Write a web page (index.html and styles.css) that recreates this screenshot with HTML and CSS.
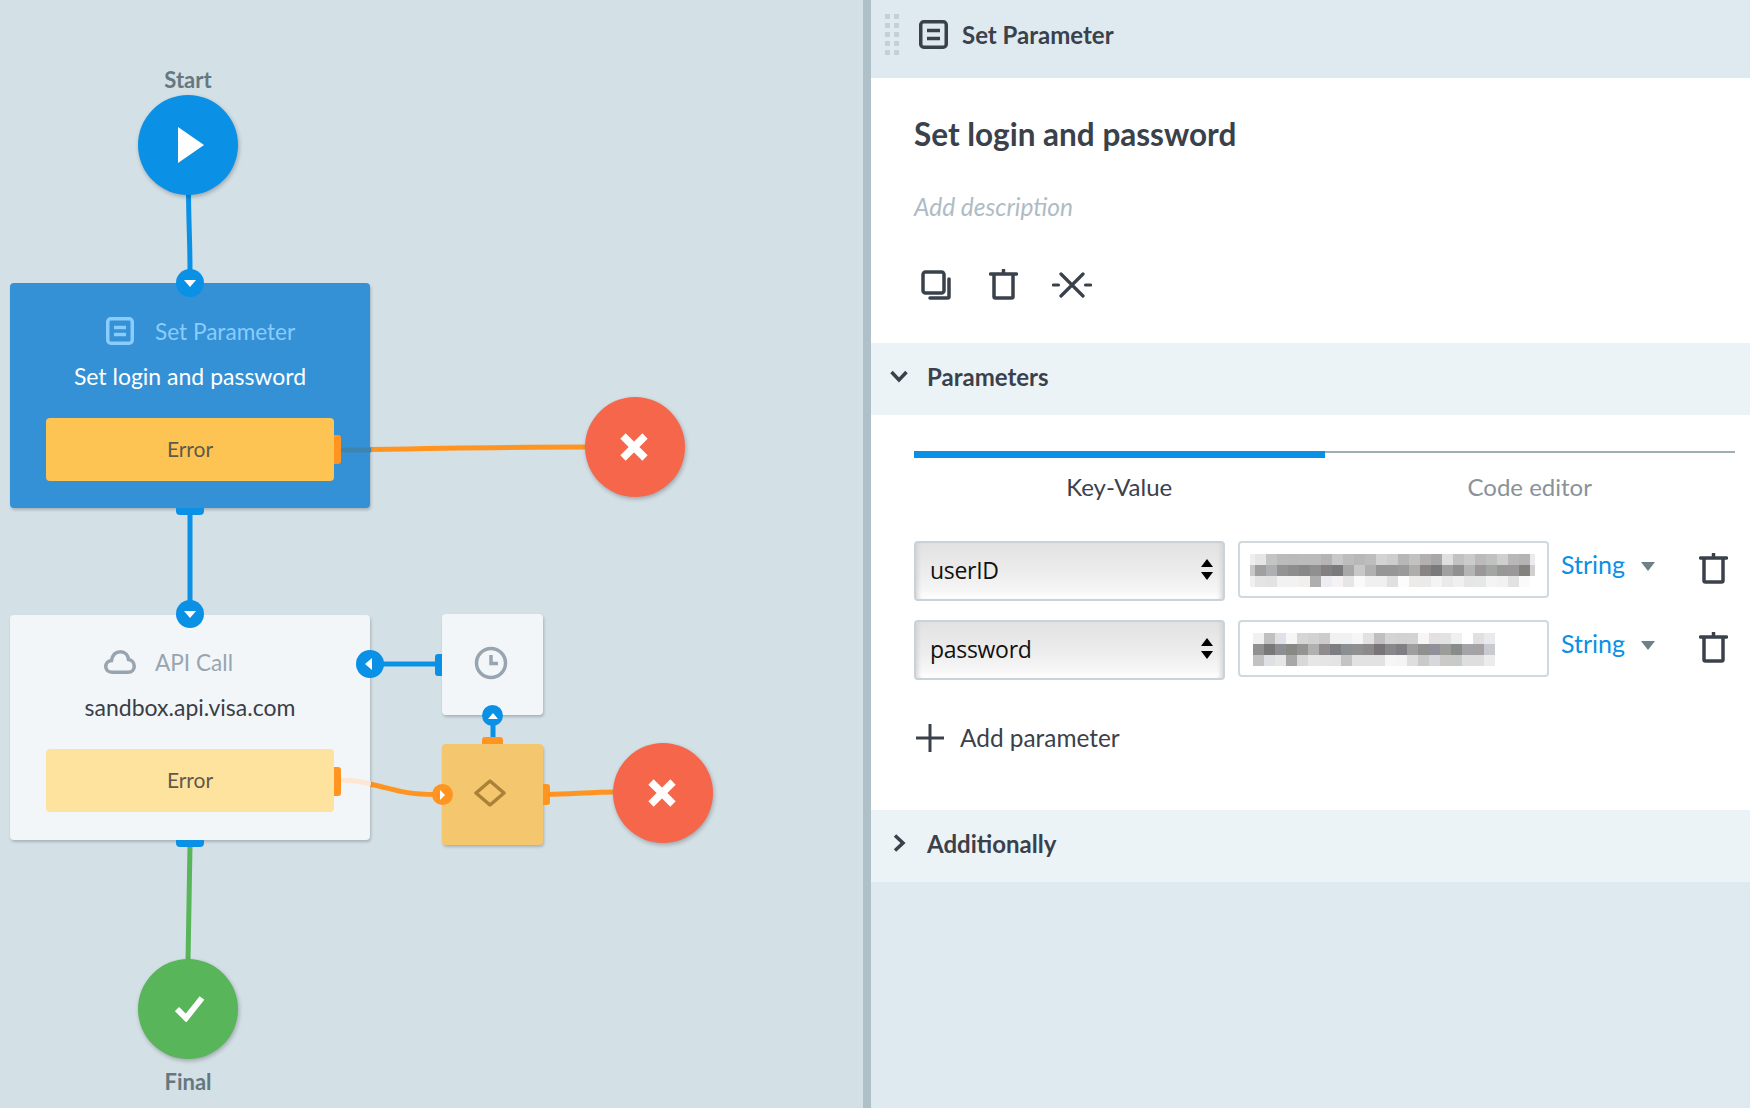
FILE: index.html
```html
<!DOCTYPE html>
<html lang="en">
<head>
    <meta charset="UTF-8">
    <meta name="viewport" content="width=device-width, initial-scale=1.0">
    <title>Set Parameter</title>
    <link rel="stylesheet" href="styles.css">
</head>
<body>
    <div class="page">
        <!-- process canvas: nodes sit at their own coordinates -->
        <div class="canvas">
            <svg class="wires" width="864" height="1108" viewBox="0 0 864 1108" fill="none">
                <path d="M188.5 190C188.5 220 190 240 190 270" stroke="#0a91e6" stroke-width="5"/>
                <path d="M190 510V604" stroke="#0a91e6" stroke-width="5"/>
                <path d="M380 664H438" stroke="#0a91e6" stroke-width="5"/>
                <path d="M493 722V740" stroke="#0a91e6" stroke-width="5"/>
                <path d="M190 845L188 962" stroke="#58b55a" stroke-width="5"/>
                <path d="M370 449.500C450 448 520 447 590 447" stroke="#ff9420" stroke-width="5"/>
                <path d="M370 784C390 788 402 794.500 436 794.500" stroke="#ff9420" stroke-width="5"/>
                <path d="M548 794.500C570 794.500 590 792 618 792" stroke="#ff9420" stroke-width="5"/>
            </svg>

            <div class="node-label label-start">Start</div>
            <div class="circle circle-start">
                <svg width="26" height="36" viewBox="0 0 26 36"><path d="M0 0L26 18L0 36Z" fill="#fff"/></svg>
            </div>

            <div class="node node-active">
                <div class="node-head">
                    <svg class="node-icon" width="28" height="28" viewBox="0 0 28 28" fill="none" stroke="#8accfb" stroke-width="3.500">
                        <rect x="1.750" y="1.750" width="24.500" height="24.500" rx="3"/>
                        <path d="M8 10.500H20M8 17.500H20"/>
                    </svg>
                    <span class="node-type">Set Parameter</span>
                </div>
                <div class="node-title">Set login and password</div>
                <div class="error-box">Error</div>
                <span class="tab tab-error"></span>
                <span class="tab tab-bottom"></span>
            </div>
            <svg class="wire-over" width="30" height="6" viewBox="0 0 30 6"><path d="M0 3H30" stroke="#3f84ae" stroke-width="5"/></svg>

            <div class="node node-light">
                <div class="node-head">
                    <svg class="node-icon" width="32" height="24" viewBox="0 0 32 24" fill="none" stroke="#98a5b0" stroke-width="3.500">
                        <path d="M8 22.250C4 22.250 1.750 19.800 1.750 16.500C1.750 13.300 4 10.800 7.500 10.500C8.500 5 12 1.750 16.500 1.750C21 1.750 24 5 24.500 9.500C28 10 30.250 13 30.250 16.300C30.250 19.800 28 22.250 24 22.250Z"/>
                    </svg>
                    <span class="node-type">API Call</span>
                </div>
                <div class="node-title">sandbox.api.visa.com</div>
                <div class="error-box">Error</div>
                <span class="tab tab-error"></span>
                <span class="tab tab-bottom"></span>
            </div>
            <svg class="wire-pale" width="30" height="8" viewBox="0 0 30 8"><path d="M0 2C12 2 20 3.500 30 6" stroke="#fde6d4" stroke-width="5" fill="none"/></svg>

            <div class="box box-timer">
                <svg width="34" height="34" viewBox="0 0 34 34" fill="none" stroke="#98a5b0" stroke-width="3.500">
                    <circle cx="17" cy="17" r="14.500"/>
                    <path d="M17 9V17.500H24"/>
                </svg>
                <span class="tab tab-left"></span>
            </div>

            <div class="box box-gate">
                <svg width="32" height="28" viewBox="0 0 32 28" fill="none" stroke="#a98237" stroke-width="3.500" stroke-linejoin="round">
                    <path d="M16 2L30 14L16 26L2 14Z"/>
                </svg>
                <span class="tab tab-top"></span>
                <span class="tab tab-right"></span>
            </div>

            <div class="port port-blue port-a"><i class="arrow arrow-down"></i></div>
            <div class="port port-blue port-b"><i class="arrow arrow-down"></i></div>
            <div class="port port-blue port-c"><i class="arrow arrow-left"></i></div>
            <div class="port port-small port-blue port-d"><i class="arrow arrow-up"></i></div>
            <div class="port port-small port-orange port-e"><i class="arrow arrow-right"></i></div>

            <div class="circle circle-fail fail-a">
                <svg width="28" height="28" viewBox="0 0 28 28"><path d="M3 3L25 25M25 3L3 25" stroke="#fff" stroke-width="7.500"/></svg>
            </div>
            <div class="circle circle-fail fail-b">
                <svg width="28" height="28" viewBox="0 0 28 28"><path d="M3 3L25 25M25 3L3 25" stroke="#fff" stroke-width="7.500"/></svg>
            </div>

            <div class="circle circle-final">
                <svg width="30" height="26" viewBox="0 0 30 26" fill="none"><path d="M2 13L11 22L27 2" stroke="#fff" stroke-width="6"/></svg>
            </div>
            <div class="node-label label-final">Final</div>
        </div>

        <div class="splitter"></div>

        <div class="panel">
            <div class="panel-head">
                <svg class="drag" width="14" height="42" viewBox="0 0 14 42" fill="#c4d0d6">
                    <rect width="5" height="5"/><rect x="9" width="5" height="5"/>
                    <rect y="9" width="5" height="5"/><rect x="9" y="9" width="5" height="5"/>
                    <rect y="18" width="5" height="5"/><rect x="9" y="18" width="5" height="5"/>
                    <rect y="27" width="5" height="5"/><rect x="9" y="27" width="5" height="5"/>
                    <rect y="36" width="5" height="5"/><rect x="9" y="36" width="5" height="5"/>
                </svg>
                <svg width="29" height="29" viewBox="0 0 29 29" fill="none" stroke="#3a414b" stroke-width="3.500">
                    <rect x="1.750" y="1.750" width="25.500" height="25.500" rx="3"/>
                    <path d="M8 10.500H21M8 18.500H21"/>
                </svg>
                <span class="panel-type">Set Parameter</span>
            </div>

            <div class="info">
                <h1 class="info-title">Set login and password</h1>
                <div class="info-desc">Add description</div>
                <div class="info-actions">
                    <svg width="30" height="30" viewBox="0 0 30 30" fill="none" stroke="#3a414b" stroke-width="3.500" stroke-linecap="round">
                        <rect x="2" y="2" width="21" height="21" rx="2.500"/>
                        <path d="M28 9V26.500Q28 28 26.500 28H9"/>
                    </svg>
                    <svg width="29" height="31" viewBox="0 0 29 31" fill="none" stroke="#3a414b" stroke-width="3.500" stroke-linecap="round" stroke-linejoin="round">
                        <path d="M1.500 5H27.500M14.500 1V5M5 5V27.500Q5 29 6.500 29H22.500Q24 29 24 27.500V5"/>
                    </svg>
                    <svg width="40" height="26" viewBox="0 0 40 26" fill="none" stroke="#3a414b" stroke-width="3.200" stroke-linecap="round">
                        <path d="M1.500 13H6.500M33.500 13H38.500M9 2L31 24M31 2L9 24"/>
                    </svg>
                </div>
            </div>

            <div class="section-head">
                <svg width="18" height="13" viewBox="0 0 18 13" fill="none" stroke="#3a414b" stroke-width="3.500"><path d="M1.500 2L9 10L16.500 2"/></svg>
                <span>Parameters</span>
            </div>

            <div class="section-body">
                <div class="tabs">
                    <div class="tab-item tab-on">Key-Value</div>
                    <div class="tab-item">Code editor</div>
                </div>

                <div class="param-row">
                    <div class="fake-select">
                        <span>userID</span>
                        <svg width="12" height="21" viewBox="0 0 12 21"><path d="M6 0L12 8H0ZM0 13H12L6 21Z"/></svg>
                    </div>
                    <div class="value-box">
                        <svg class="blur" width="285" height="33" viewBox="6 0 285 33" shape-rendering="crispEdges">
                            <g>
                                <rect x="0" y="0" width="11" height="11" fill="#eeeeee"/><rect x="11" y="0" width="11" height="11" fill="#e6e6e6"/><rect x="22" y="0" width="11" height="11" fill="#c4c4c4"/><rect x="33" y="0" width="11" height="11" fill="#bbbbbb"/><rect x="44" y="0" width="11" height="11" fill="#bababa"/><rect x="55" y="0" width="11" height="11" fill="#bbbbbb"/><rect x="66" y="0" width="11" height="11" fill="#bbbbbb"/><rect x="77" y="0" width="11" height="11" fill="#b4b4b6"/><rect x="88" y="0" width="11" height="11" fill="#c8c8c8"/><rect x="99" y="0" width="11" height="11" fill="#bdbdbd"/><rect x="110" y="0" width="11" height="11" fill="#b8b8b8"/><rect x="121" y="0" width="11" height="11" fill="#bdbdbd"/><rect x="132" y="0" width="11" height="11" fill="#d2d4d2"/><rect x="143" y="0" width="11" height="11" fill="#cdcdcd"/><rect x="154" y="0" width="11" height="11" fill="#b8b6b8"/><rect x="165" y="0" width="11" height="11" fill="#c2c2c2"/><rect x="176" y="0" width="11" height="11" fill="#b2b0b0"/><rect x="187" y="0" width="11" height="11" fill="#a9a7aa"/><rect x="198" y="0" width="11" height="11" fill="#dfdfdf"/><rect x="209" y="0" width="11" height="11" fill="#c2c2c2"/><rect x="220" y="0" width="11" height="11" fill="#cbcbcb"/><rect x="231" y="0" width="11" height="11" fill="#bcbaba"/><rect x="242" y="0" width="11" height="11" fill="#c0c2c0"/><rect x="253" y="0" width="11" height="11" fill="#cfcfcf"/><rect x="264" y="0" width="11" height="11" fill="#b8b8b6"/><rect x="275" y="0" width="11" height="11" fill="#b4b4b4"/><rect x="286" y="0" width="11" height="11" fill="#ebebeb"/>
                            </g>
                            <g>
                                <rect x="0" y="11" width="11" height="11" fill="#c8c8c8"/><rect x="11" y="11" width="11" height="11" fill="#a0a0a0"/><rect x="22" y="11" width="11" height="11" fill="#adafb2"/><rect x="33" y="11" width="11" height="11" fill="#939393"/><rect x="44" y="11" width="11" height="11" fill="#8d8d8d"/><rect x="55" y="11" width="11" height="11" fill="#888888"/><rect x="66" y="11" width="11" height="11" fill="#909090"/><rect x="77" y="11" width="11" height="11" fill="#848080"/><rect x="88" y="11" width="11" height="11" fill="#7a7a7c"/><rect x="99" y="11" width="11" height="11" fill="#a8a8a8"/><rect x="110" y="11" width="11" height="11" fill="#c8c8c8"/><rect x="121" y="11" width="11" height="11" fill="#b0b0b0"/><rect x="132" y="11" width="11" height="11" fill="#969696"/><rect x="143" y="11" width="11" height="11" fill="#969696"/><rect x="154" y="11" width="11" height="11" fill="#9a9a9a"/><rect x="165" y="11" width="11" height="11" fill="#adadab"/><rect x="176" y="11" width="11" height="11" fill="#888484"/><rect x="187" y="11" width="11" height="11" fill="#7a7a7c"/><rect x="198" y="11" width="11" height="11" fill="#a0a0a0"/><rect x="209" y="11" width="11" height="11" fill="#909090"/><rect x="220" y="11" width="11" height="11" fill="#b4b4b4"/><rect x="231" y="11" width="11" height="11" fill="#9a989a"/><rect x="242" y="11" width="11" height="11" fill="#a4a6a4"/><rect x="253" y="11" width="11" height="11" fill="#989898"/><rect x="264" y="11" width="11" height="11" fill="#9a9898"/><rect x="275" y="11" width="11" height="11" fill="#84827e"/><rect x="286" y="11" width="11" height="11" fill="#d0d0d0"/>
                            </g>
                            <g>
                                <rect x="0" y="22" width="11" height="11" fill="#f0f0f0"/><rect x="11" y="22" width="11" height="11" fill="#e4e4e4"/><rect x="22" y="22" width="11" height="11" fill="#e2e2e2"/><rect x="33" y="22" width="11" height="11" fill="#f2f2f2"/><rect x="44" y="22" width="11" height="11" fill="#f2f2f2"/><rect x="55" y="22" width="11" height="11" fill="#f2f0ee"/><rect x="66" y="22" width="11" height="11" fill="#aeaeae"/><rect x="77" y="22" width="11" height="11" fill="#eceef2"/><rect x="88" y="22" width="11" height="11" fill="#f4f2f2"/><rect x="99" y="22" width="11" height="11" fill="#e6e6e6"/><rect x="110" y="22" width="11" height="11" fill="#fafafa"/><rect x="121" y="22" width="11" height="11" fill="#f0f0f0"/><rect x="132" y="22" width="11" height="11" fill="#f0f0f0"/><rect x="143" y="22" width="11" height="11" fill="#e0e0e0"/><rect x="154" y="22" width="11" height="11" fill="#fcfcfc"/><rect x="165" y="22" width="11" height="11" fill="#ecebe9"/><rect x="176" y="22" width="11" height="11" fill="#eaeaea"/><rect x="187" y="22" width="11" height="11" fill="#f4f4f4"/><rect x="198" y="22" width="11" height="11" fill="#eaeaea"/><rect x="209" y="22" width="11" height="11" fill="#f0f0f0"/><rect x="220" y="22" width="11" height="11" fill="#e6e6e6"/><rect x="231" y="22" width="11" height="11" fill="#e6e8e8"/><rect x="242" y="22" width="11" height="11" fill="#f4f4f4"/><rect x="253" y="22" width="11" height="11" fill="#f2f2f2"/><rect x="264" y="22" width="11" height="11" fill="#e2e2e2"/><rect x="275" y="22" width="11" height="11" fill="#fafafa"/>
                            </g>
                        </svg>
                    </div>
                    <div class="type-pick"><span>String</span><i class="caret"></i></div>
                    <svg class="row-trash" width="29" height="31" viewBox="0 0 29 31" fill="none" stroke="#3a414b" stroke-width="3.500" stroke-linecap="round" stroke-linejoin="round">
                        <path d="M1.500 5H27.500M14.500 1V5M5 5V27.500Q5 29 6.500 29H22.500Q24 29 24 27.500V5"/>
                    </svg>
                </div>

                <div class="param-row">
                    <div class="fake-select">
                        <span>password</span>
                        <svg width="12" height="21" viewBox="0 0 12 21"><path d="M6 0L12 8H0ZM0 13H12L6 21Z"/></svg>
                    </div>
                    <div class="value-box value-short">
                        <svg class="blur" width="242" height="33" viewBox="0 0 242 33" shape-rendering="crispEdges">
                            <g>
                                <rect x="0" y="0" width="11" height="11" fill="#f2f0f0"/><rect x="11" y="0" width="11" height="11" fill="#c0c0c0"/><rect x="22" y="0" width="11" height="11" fill="#dee2e6"/><rect x="33" y="0" width="11" height="11" fill="#f6f6f6"/><rect x="44" y="0" width="11" height="11" fill="#d6d6d6"/><rect x="55" y="0" width="11" height="11" fill="#d2d2d2"/><rect x="66" y="0" width="11" height="11" fill="#cccccc"/><rect x="77" y="0" width="11" height="11" fill="#f0f2f2"/><rect x="88" y="0" width="11" height="11" fill="#f0f2f2"/><rect x="99" y="0" width="11" height="11" fill="#f6f6f6"/><rect x="110" y="0" width="11" height="11" fill="#e4e2e0"/><rect x="121" y="0" width="11" height="11" fill="#c0bec0"/><rect x="132" y="0" width="11" height="11" fill="#d4d4d4"/><rect x="143" y="0" width="11" height="11" fill="#d2d2d2"/><rect x="154" y="0" width="11" height="11" fill="#d2d4d2"/><rect x="165" y="0" width="11" height="11" fill="#f6f6f6"/><rect x="176" y="0" width="11" height="11" fill="#e4e0e2"/><rect x="187" y="0" width="11" height="11" fill="#e2e2e4"/><rect x="198" y="0" width="11" height="11" fill="#f0f0f0"/><rect x="209" y="0" width="11" height="11" fill="#ffffff"/><rect x="220" y="0" width="11" height="11" fill="#e2dfe0"/><rect x="231" y="0" width="11" height="11" fill="#eaeaee"/>
                            </g>
                            <g>
                                <rect x="0" y="11" width="11" height="11" fill="#909090"/><rect x="11" y="11" width="11" height="11" fill="#787878"/><rect x="22" y="11" width="11" height="11" fill="#8c8e92"/><rect x="33" y="11" width="11" height="11" fill="#888884"/><rect x="44" y="11" width="11" height="11" fill="#949492"/><rect x="55" y="11" width="11" height="11" fill="#b0b0b0"/><rect x="66" y="11" width="11" height="11" fill="#908c8e"/><rect x="77" y="11" width="11" height="11" fill="#7c7e82"/><rect x="88" y="11" width="11" height="11" fill="#8a9092"/><rect x="99" y="11" width="11" height="11" fill="#909090"/><rect x="110" y="11" width="11" height="11" fill="#8c8a8a"/><rect x="121" y="11" width="11" height="11" fill="#787478"/><rect x="132" y="11" width="11" height="11" fill="#88888a"/><rect x="143" y="11" width="11" height="11" fill="#808084"/><rect x="154" y="11" width="11" height="11" fill="#9e9e9e"/><rect x="165" y="11" width="11" height="11" fill="#909090"/><rect x="176" y="11" width="11" height="11" fill="#90909a"/><rect x="187" y="11" width="11" height="11" fill="#9c9c98"/><rect x="198" y="11" width="11" height="11" fill="#888c8a"/><rect x="209" y="11" width="11" height="11" fill="#a4a4a8"/><rect x="220" y="11" width="11" height="11" fill="#a4a2a4"/><rect x="231" y="11" width="11" height="11" fill="#c8cad0"/>
                            </g>
                            <g>
                                <rect x="0" y="22" width="11" height="11" fill="#c2c2c2"/><rect x="11" y="22" width="11" height="11" fill="#dee0e4"/><rect x="22" y="22" width="11" height="11" fill="#e6e6e4"/><rect x="33" y="22" width="11" height="11" fill="#a8a8a8"/><rect x="44" y="22" width="11" height="11" fill="#d8d8d8"/><rect x="55" y="22" width="11" height="11" fill="#e6e6e4"/><rect x="66" y="22" width="11" height="11" fill="#e4e6e6"/><rect x="77" y="22" width="11" height="11" fill="#e4e4e4"/><rect x="88" y="22" width="11" height="11" fill="#c4c4c2"/><rect x="99" y="22" width="11" height="11" fill="#e2e2e2"/><rect x="110" y="22" width="11" height="11" fill="#e2e2e2"/><rect x="121" y="22" width="11" height="11" fill="#e2e2e2"/><rect x="132" y="22" width="11" height="11" fill="#f6f6f6"/><rect x="143" y="22" width="11" height="11" fill="#f4f4f4"/><rect x="154" y="22" width="11" height="11" fill="#dedede"/><rect x="165" y="22" width="11" height="11" fill="#cacaca"/><rect x="176" y="22" width="11" height="11" fill="#d6d8dc"/><rect x="187" y="22" width="11" height="11" fill="#cccac8"/><rect x="198" y="22" width="11" height="11" fill="#c8ccc8"/><rect x="209" y="22" width="11" height="11" fill="#dedede"/><rect x="220" y="22" width="11" height="11" fill="#dedede"/><rect x="231" y="22" width="11" height="11" fill="#ececec"/>
                            </g>
                        </svg>
                    </div>
                    <div class="type-pick"><span>String</span><i class="caret"></i></div>
                    <svg class="row-trash" width="29" height="31" viewBox="0 0 29 31" fill="none" stroke="#3a414b" stroke-width="3.500" stroke-linecap="round" stroke-linejoin="round">
                        <path d="M1.500 5H27.500M14.500 1V5M5 5V27.500Q5 29 6.500 29H22.500Q24 29 24 27.500V5"/>
                    </svg>
                </div>

                <div class="add-param">
                    <svg width="28" height="28" viewBox="0 0 28 28" stroke="#3a414b" stroke-width="3"><path d="M14 0V28M0 14H28"/></svg>
                    <span>Add parameter</span>
                </div>
            </div>

            <div class="section-head">
                <svg width="18" height="18" viewBox="0 0 18 18" fill="none" stroke="#3a414b" stroke-width="3.500"><path d="M5 1.500L13 9L5 16.500"/></svg>
                <span>Additionally</span>
            </div>
        </div>
    </div>
</body>
</html>
```

FILE: styles.css
```css
* {
    box-sizing: border-box;
}

body {
    margin: 0;
    padding: 0;
    font-family: 'Lato', sans-serif;
    color: #3a414b;
}

.page {
    display: flex;
    width: 1750px;
    height: 1108px;
    overflow: hidden;
}

/* canvas */
.canvas {
    position: relative;
    width: 863px;
    height: 1108px;
    background-color: #d3e0e6;
}

.wires {
    position: absolute;
    left: 0;
    top: 0;
}

.node-label {
    position: absolute;
    left: 138px;
    width: 100px;
    text-align: center;
    font-size: 22px;
    font-weight: bold;
    color: #66787f;
}

.label-start {
    top: 66px;
}

.label-final {
    top: 1068px;
}

.circle {
    position: absolute;
    display: flex;
    align-items: center;
    justify-content: center;
    width: 100px;
    height: 100px;
    border-radius: 50%;
    box-shadow: 1px 2px 4px rgba(0,0,0,0.25);
}

.circle-start {
    left: 138px;
    top: 95px;
    background-color: #0a91e6;
    padding-left: 5px;
}

.circle-final {
    left: 138px;
    top: 959px;
    background-color: #58b55a;
    padding-left: 4px;
}

.circle-fail {
    background-color: #f6664b;
    padding-right: 2px;
}

.fail-a {
    left: 585px;
    top: 397px;
}

.fail-b {
    left: 613px;
    top: 743px;
}

.node {
    position: absolute;
    left: 10px;
    width: 360px;
    height: 225px;
    padding: 33px 36px 0;
    border-radius: 4px;
    box-shadow: 1px 2px 3px rgba(0,0,0,0.2);
}

.node-active {
    top: 283px;
    background-color: #3491d5;
}

.node-light {
    top: 615px;
    padding-top: 32px;
    background-color: #f3f6f8;
}

.node-head {
    display: grid;
    grid-template-columns: 32px auto;
    column-gap: 19px;
    align-items: center;
    height: 30px;
    padding-left: 58px;
}

.node-icon {
    justify-self: center;
}

.node-type {
    font-size: 22.600px;
}

.node-active .node-type {
    color: #8accfb;
}

.node-light .node-type {
    color: #98a5b0;
}

.node-title {
    margin-top: 15px;
    text-align: center;
    font-size: 23px;
    line-height: 30px;
    white-space: nowrap;
}

.node-active .node-title {
    color: #fff;
}

.node-light .node-title {
    color: #3a3f47;
}

.error-box {
    display: flex;
    align-items: center;
    justify-content: center;
    height: 63px;
    margin-top: 27px;
    padding-bottom: 3px;
    border-radius: 4px;
    font-size: 21px;
    color: #5e5a4c;
}

.node-active .error-box {
    background-color: #fdc453;
}

.node-light .error-box {
    background-color: #fee39f;
}

.tab {
    position: absolute;
    background-color: #0a91e6;
}

.tab-error {
    left: 324px;
    top: 152px;
    width: 7px;
    height: 29px;
    border-radius: 0 3px 3px 0;
    background-color: #ff9420;
}

.tab-bottom {
    left: 166px;
    top: 225px;
    width: 28px;
    height: 7px;
    border-radius: 0 0 4px 4px;
}

.tab-left {
    left: -7px;
    top: 40px;
    width: 7px;
    height: 22px;
    border-radius: 3px 0 0 3px;
}

.tab-top {
    left: 40px;
    top: -7px;
    width: 21px;
    height: 7px;
    border-radius: 3px 3px 0 0;
    background-color: #ff9420;
}

.tab-right {
    left: 101px;
    top: 40px;
    width: 7px;
    height: 21px;
    border-radius: 0 3px 3px 0;
    background-color: #ff9420;
}

.wire-over {
    position: absolute;
    left: 341px;
    top: 447px;
}

.wire-pale {
    position: absolute;
    left: 341px;
    top: 778px;
}

.box {
    position: absolute;
    left: 442px;
    display: flex;
    align-items: center;
    justify-content: center;
    width: 101px;
    height: 101px;
    padding-right: 4px;
    border-radius: 4px;
    box-shadow: 1px 2px 3px rgba(0,0,0,0.2);
}

.box-timer {
    top: 614px;
    background-color: #f3f6f8;
    padding-bottom: 4px;
}

.box-gate {
    top: 744px;
    background-color: #f4c76e;
    padding-right: 6px;
    padding-bottom: 4px;
}

.port {
    position: absolute;
    display: flex;
    align-items: center;
    justify-content: center;
    width: 28px;
    height: 28px;
    border-radius: 50%;
}

.port-small {
    width: 21px;
    height: 21px;
}

.port-blue {
    background-color: #0a91e6;
}

.port-orange {
    background-color: #ff9420;
}

.port-a {
    left: 176px;
    top: 269px;
}

.port-b {
    left: 176px;
    top: 600px;
}

.port-c {
    left: 356px;
    top: 650px;
}

.port-d {
    left: 482px;
    top: 705px;
}

.port-e {
    left: 432px;
    top: 784px;
}

.arrow {
    width: 0;
    height: 0;
    border-style: solid;
    border-color: transparent;
}

.arrow-down {
    border-width: 7px 6px 0;
    border-top-color: #fff;
}

.arrow-up {
    border-width: 0 5px 6px;
    border-bottom-color: #fff;
}

.arrow-left {
    border-width: 6px 7px 6px 0;
    border-right-color: #fff;
    margin-right: 4px;
}

.arrow-right {
    border-width: 5px 0 5px 5px;
    border-left-color: #fff;
}

/* splitter and panel */
.splitter {
    width: 8px;
    background-color: #afc0c8;
}

.panel {
    flex: 1;
    background-color: #dfe9f0;
}

.panel-head {
    display: flex;
    align-items: center;
    height: 78px;
    padding: 0 0 9px 14px;
}

.drag {
    margin-right: 20px;
}

.panel-type {
    margin-left: 14px;
    font-size: 24px;
    font-weight: bold;
}

.info {
    height: 265px;
    padding: 35px 0 0 43px;
    background-color: #fff;
}

.info-title {
    margin: 0;
    font-size: 31.500px;
    line-height: 42px;
    font-weight: bold;
}

.info-desc {
    margin-top: 37px;
    font-size: 24.500px;
    line-height: 30px;
    font-style: italic;
    color: #aebcc4;
}

.info-actions {
    display: flex;
    align-items: center;
    gap: 39px;
    margin-top: 47px;
    padding-left: 7px;
}

.info-actions svg:nth-child(2) {
    margin-left: -1px;
}

.info-actions svg:nth-child(3) {
    margin-left: -5px;
}

.section-head {
    display: flex;
    align-items: center;
    height: 72px;
    padding: 0 0 6px 19px;
    background-color: #ecf3f7;
    font-size: 24px;
    font-weight: bold;
}

.section-head svg {
    flex-shrink: 0;
}

.section-head span {
    margin-left: 19px;
}

.section-body {
    height: 395px;
    padding: 36px 15px 0 43px;
    background-color: #fff;
}

.tabs {
    display: flex;
    height: 90px;
    border-top: 2px solid #9fadb5;
}

.tab-item {
    flex: 1;
    margin-top: -2px;
    padding-top: 13px;
    border-top: 7px solid transparent;
    text-align: center;
    font-size: 24px;
    line-height: 32px;
    color: #8a9298;
}

.tab-on {
    border-top-color: #0a91e6;
    color: #3a414b;
}

.param-row {
    display: flex;
    align-items: flex-start;
    height: 79px;
}

.fake-select {
    display: flex;
    align-items: center;
    justify-content: space-between;
    width: 311px;
    height: 60px;
    padding: 0 10px 3px 14px;
    border: 2px solid #c8d2d8;
    border-radius: 4px;
    background: linear-gradient(#e2e2e2, #ededed 55%, #f6f6f6 85%, #fff);
    box-shadow: inset 5px 0 4px -3px #d4d4d4, inset -5px 0 4px -3px #d4d4d4;
    font-family: 'Open Sans', sans-serif;
    font-size: 23px;
    letter-spacing: -0.3px;
    color: #111;
}

.value-box {
    width: 311px;
    height: 57px;
    margin-left: 13px;
    padding: 11px 0 0 10px;
    border: 2px solid #d0d9de;
    border-radius: 4px;
    background-color: #fff;
}

.value-short {
    padding-left: 13px;
}

.blur {
    display: block;
    filter: blur(0.7px);
}

.type-pick {
    display: flex;
    align-items: center;
    width: 138px;
    height: 50px;
    margin-left: 12px;
    padding-bottom: 4px;
    font-size: 25px;
    color: #0a91e6;
}

.caret {
    width: 0;
    height: 0;
    margin-left: 16px;
    margin-top: 4px;
    border-style: solid;
    border-color: #6e8088 transparent transparent;
    border-width: 9px 7px 0;
}

.row-trash {
    flex-shrink: 0;
    margin-top: 12px;
}

.add-param {
    display: flex;
    align-items: center;
    margin-top: 24px;
    padding-left: 2px;
    font-size: 24.400px;
}

.add-param span {
    margin-left: 16px;
}
```
